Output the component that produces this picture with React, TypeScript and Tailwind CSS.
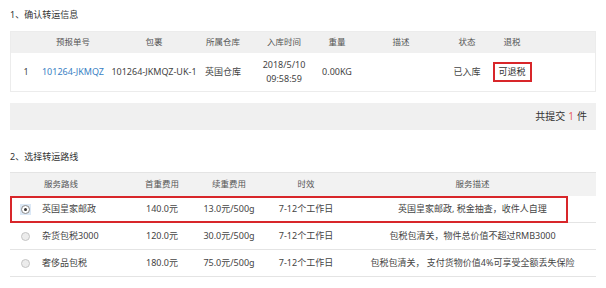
const font = "font-[family-name:'Noto_Sans','Noto_Sans_CJK_SC',sans-serif]"

const infoCols = 'grid grid-cols-[30px_64px_98px_40px_82px_24px_104px_28px_62px_53px]'
const routeCols = 'grid grid-cols-[30px_88px_68px_66px_88px_245px]'

function Cell({ children, className = '' }: { children?: React.ReactNode; className?: string }) {
  return <div className={`flex items-center justify-center whitespace-nowrap ${className}`}>{children}</div>
}

function Radio({ checked }: { checked?: boolean }) {
  if (checked) {
    return (
      <span className="flex h-[11px] w-[11px] items-center justify-center bg-[#dbe8f6]">
        <span className="flex h-[9px] w-[9px] items-center justify-center rounded-full border border-[#8a8a8a] bg-white">
          <span className="h-[3px] w-[3px] rounded-full bg-[#333]" />
        </span>
      </span>
    )
  }
  return <span className="h-[9px] w-[9px] rounded-full border border-[#c4c4c4] bg-[#ececec]" />
}

const routes = [
  { name: '英国皇家邮政', first: '140.0元', next: '13.0元/500g', time: '7-12个工作日', desc: '英国皇家邮政, 税金抽查，收件人自理', checked: true },
  { name: '杂货包税3000', first: '120.0元', next: '30.0元/500g', time: '7-12个工作日', desc: '包税包清关，物件总价值不超过RMB3000' },
  { name: '奢侈品包税', first: '180.0元', next: '75.0元/500g', time: '7-12个工作日', desc: '包税包清关， 支付货物价值4%可享受全额丢失保险' },
]

export default function App() {
  return (
    <div className={`${font} h-[288px] w-[606px] overflow-hidden bg-white px-[10px] text-[9px] text-[#444]`}>
      <h2 className="pt-[9px] text-[9px] leading-[12px] text-[#333]">1、确认转运信息</h2>

      <div className="mt-[10px] border border-[#ececec]">
        <div className={`${infoCols} h-[21px] bg-[#f0f0f0] text-[8.5px] text-[#555]`}>
          <Cell />
          <Cell>预报单号</Cell>
          <Cell>包裹</Cell>
          <Cell>所属仓库</Cell>
          <Cell>入库时间</Cell>
          <Cell>重量</Cell>
          <Cell>描述</Cell>
          <Cell>状态</Cell>
          <Cell>退税</Cell>
          <Cell />
        </div>
        <div className={`${infoCols} h-[38px]`}>
          <Cell>1</Cell>
          <Cell className="text-[#3a7fc4]">101264-JKMQZ</Cell>
          <Cell>101264-JKMQZ-UK-1</Cell>
          <Cell>英国仓库</Cell>
          <Cell className="flex-col leading-[14px]">
            <span>2018/5/10</span>
            <span>09:58:59</span>
          </Cell>
          <Cell>0.00KG</Cell>
          <Cell />
          <Cell>已入库</Cell>
          <Cell>
            <span className="flex h-[20px] w-[39px] items-center justify-center border-2 border-[#d8262a] text-[#333]">
              可退税
            </span>
          </Cell>
          <Cell />
        </div>
      </div>

      <div className="mt-[11px] flex h-[27px] items-center justify-end bg-[#f0f0f0] pr-[9px] text-[10px] text-[#333]">
        共提交 <span className="mx-[3px] text-[#e8605e]">1</span> 件
      </div>

      <h2 className="mt-[21px] text-[9px] leading-[12px] text-[#333]">2、选择转运路线</h2>

      <div className="mt-[9px] border-t border-[#e4e4e4]">
        <div className={`${routeCols} h-[23px] bg-[#f2f2f2] text-[8.5px] text-[#555]`}>
          <Cell />
          <Cell className="justify-start pl-[4px]">服务路线</Cell>
          <Cell>首重费用</Cell>
          <Cell>续重费用</Cell>
          <Cell>时效</Cell>
          <Cell>服务描述</Cell>
        </div>
        {routes.map((r) => (
          <div key={r.name} className={`${routeCols} relative h-[27px] border-b border-[#e4e4e4]`}>
            <Cell>
              <Radio checked={r.checked} />
            </Cell>
            <Cell className="justify-start pl-[2px]">{r.name}</Cell>
            <Cell>{r.first}</Cell>
            <Cell>{r.next}</Cell>
            <Cell>{r.time}</Cell>
            <Cell>{r.desc}</Cell>
            {r.checked && (
              <div className="pointer-events-none absolute top-0 bottom-[-1px] left-0 w-[558px] border-2 border-[#d8262a]" />
            )}
          </div>
        ))}
      </div>
    </div>
  )
}
